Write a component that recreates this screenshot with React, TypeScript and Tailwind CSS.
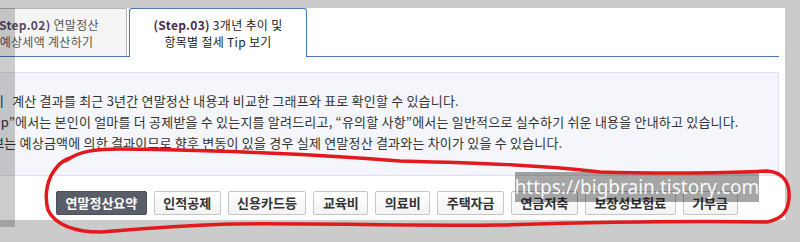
const KR = "font-['Noto_Sans_CJK_KR',sans-serif]";

const menus = [
  "연말정산요약",
  "인적공제",
  "신용카드등",
  "교육비",
  "의료비",
  "주택자금",
  "연금저축",
  "보장성보험료",
  "기부금",
];

const App = () => {
  return (
    <div className={`relative h-[242px] w-[800px] overflow-hidden bg-[#cbcbcb] ${KR}`}>
      {/* panel */}
      <div className="ml-[-40px] mt-[15px] h-[212px] w-[825px] bg-white">
        {/* tabs */}
        <div className="mr-[6px] ml-[7px] mt-[-7px] flex items-end gap-[2px] border-b border-[#4a76b4]">
          <div className="flex h-[48px] w-[160px] flex-col items-center justify-center rounded-tr-[2px] border-t border-r border-[#b4b4b4] bg-[#f5f5f5] text-[12px] leading-[17px] tracking-[0.3px] text-[#555]">
            <p>
              <b className="text-[#5b4a5e]">(Step.02)</b> 연말정산
            </p>
            <p>예상세액 계산하기</p>
          </div>
          <div className="-mb-px flex h-[49px] w-[178px] flex-col items-center justify-center rounded-t-[3px] border border-b-0 border-[#4a76b4] bg-white pb-px text-[12px] leading-[17px] tracking-[0.3px] text-[#222]">
            <p>
              <b className="text-[#4a2a4c]">(Step.03)</b> 3개년 추이 및
            </p>
            <p>항목별 절세 Tip 보기</p>
          </div>
        </div>

        {/* info box */}
        <div className="mr-[6px] ml-[7px] mt-[15px] border border-[#dde3ee] bg-[#f4f6fb] pt-[17px] pb-[22px] pl-[32px] text-[13px] leading-[21px] tracking-[0.2px] whitespace-nowrap text-[#333]">
          <p>
            <span className="ml-[-8px]">이</span>
            <span className="ml-[8px]">
              계산 결과를 최근 3년간 연말정산 내용과 비교한 그래프와 표로 확인할 수 있습니다.
            </span>
          </p>
          <p className="ml-[-11px]">
            Tip”에서는 본인이 얼마를 더 공제받을 수 있는지를 알려드리고, “유의할 사항”에서는 일반적으로 실수하기 쉬운 내용을 안내하고 있습니다.
          </p>
          <p className="ml-[-20px]">
            정보는 예상금액에 의한 결과이므로 향후 변동이 있을 경우 실제 연말정산 결과와는 차이가 있을 수 있습니다.
          </p>
        </div>

        {/* menu buttons */}
        <ul className="ml-[96px] mt-[15px] flex gap-[7px]">
          {menus.map((m, i) => (
            <li
              key={m}
              className={
                i === 0
                  ? "h-[24px] rounded-[2px] border border-[#4b4f59] bg-[#5a5e69] px-[8.5px] text-[13px] leading-[22px] font-bold text-white"
                  : "h-[24px] rounded-[2px] border border-[#c6c6c6] bg-gradient-to-b from-white to-[#f3f3f3] px-[8.5px] text-[13px] leading-[22px] font-bold text-[#333]"
              }
            >
              {m}
            </li>
          ))}
        </ul>
      </div>

      {/* left shaded strip from the capture */}
      <div className="absolute top-[8px] left-0 h-[219px] w-[15px] bg-black/20" />

      {/* watermark */}
      <div className="absolute top-[172px] left-[515px] flex h-[30px] w-[244px] items-center justify-center bg-black/35 font-['Noto_Sans',sans-serif] text-[19px] text-white/95">
        https://bigbrain.tistory.com
      </div>

      {/* red marker loop */}
      <svg className="pointer-events-none absolute inset-0" width="800" height="242" viewBox="0 0 800 242">
        <path
          d="M57 167 C60 163 63 161 67 160 C80 151 95 149 120 149 C200 150 300 153 400 161 C480 163 540 165 600 172 C660 174 730 173 767 171 C785 172 790 185 789 198 C788 212 782 219 767 222 C700 221 600 222 500 225 C430 226 300 223 233 224 C180 225 130 230 100 232 C75 232 55 225 48 210 C44 195 47 178 57 167 C60 163 64 160 70 158"
          fill="none"
          stroke="#e21a1d"
          strokeWidth="3.5"
          strokeLinecap="round"
        />
      </svg>
    </div>
  );
};

export default App;
